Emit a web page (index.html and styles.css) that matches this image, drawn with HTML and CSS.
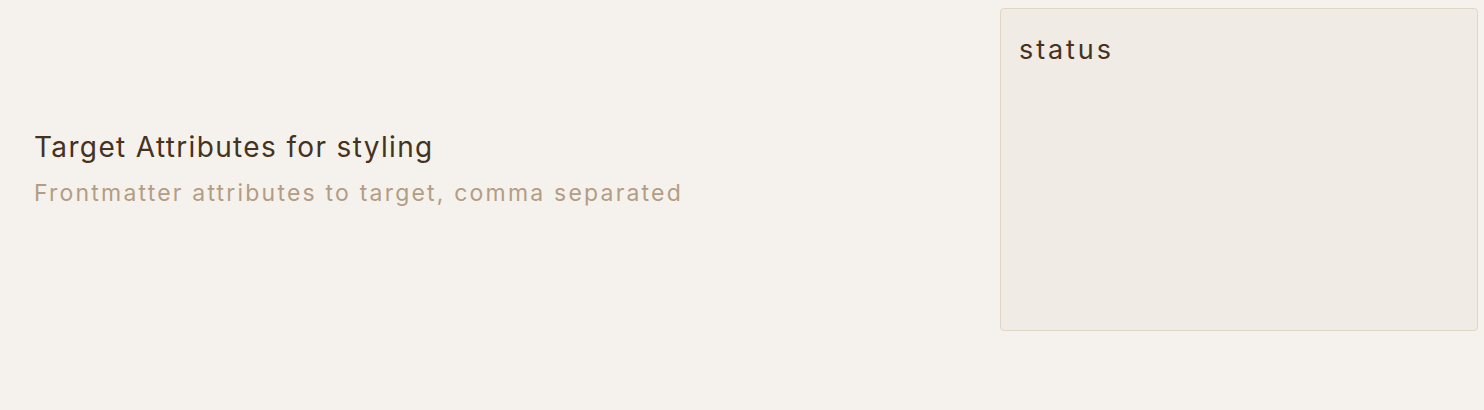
FILE: index.html
```html
<!DOCTYPE html>
<html>
<head>
<meta charset="utf-8">
<link rel="stylesheet" href="styles.css">
</head>
<body>
<div class="setting-item">
  <div class="setting-info">
    <div class="setting-name">Target Attributes for styling</div>
    <div class="setting-desc">Frontmatter attributes to target, comma separated</div>
  </div>
  <div class="setting-control">
    <textarea class="input">status</textarea>
  </div>
</div>
</body>
</html>
```
FILE: styles.css
```css
html, body {
  margin: 0;
  padding: 0;
  background: #f5f2ed;
  height: 100%;
}
.setting-item {
  display: flex;
  align-items: center;
  padding: 8px 6px 0 34px;
  font-family: Inter, sans-serif;
}
.setting-info {
  flex: 1;
  display: flex;
  flex-direction: column;
  gap: 11px;
}
.setting-name {
  font-size: 28px;
  line-height: 36px;
  color: #45321f;
  letter-spacing: 1.35px;
}
.setting-desc {
  font-size: 23px;
  line-height: 34px;
  color: #b39d84;
  letter-spacing: 2.2px;
}
.setting-control {
  display: flex;
}
.input {
  width: 478px;
  height: 323px;
  box-sizing: border-box;
  margin: 0;
  resize: none;
  background: #f0ebe4;
  border: 1px solid #e0d6c7;
  border-radius: 4px;
  padding: 24px 18px 8px;
  font-family: Inter, sans-serif;
  font-size: 27px;
  letter-spacing: 2.9px;
  color: #45321f;
  outline: none;
}
```
